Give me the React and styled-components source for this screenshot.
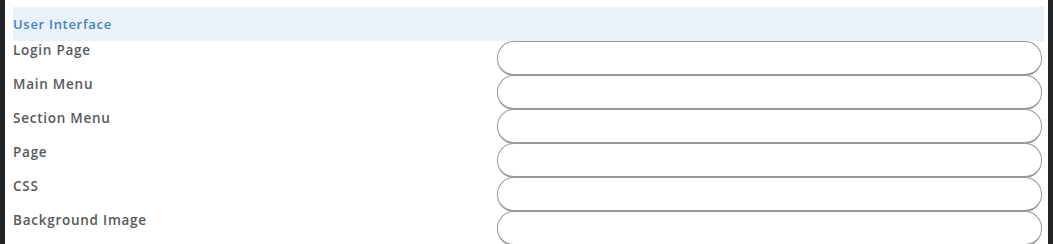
import React from "react";
import styled, { createGlobalStyle } from "styled-components";

const Global = createGlobalStyle`
  html, body { margin: 0; padding: 0; background: #ffffff; }
  body { font-family: "Open Sans", "Noto Sans", sans-serif; }
`;

const Frame = styled.div`
  display: flex;
  height: 244px;
  background: #ffffff;
  border-left: 5px solid #202427;
  border-right: 5px solid #202427;
  box-sizing: border-box;
`;

const Panel = styled.div`
  flex: 1;
  padding: 7px 4px 0 8px;
  overflow: hidden;
`;

const SectionHeader = styled.div`
  height: 34px;
  background: #eaf1f8;
  color: #3f83c4;
  font-size: 13px;
  font-weight: 600;
  display: flex;
  align-items: center;
  letter-spacing: 0.7px;
`;

const Row = styled.div`
  display: grid;
  grid-template-columns: 484px 545px;
  height: 34px;
`;

const Label = styled.div`
  color: #58595b;
  font-size: 13.5px;
  font-weight: 600;
  line-height: 17px;
  padding-top: 1px;
  letter-spacing: 0.75px;
`;

const Input = styled.input`
  box-sizing: border-box;
  width: 545px;
  height: 35px;
  margin: 0;
  border: 1px solid #9a9a9a;
  border-bottom: 2px solid #9a9a9a;
  border-radius: 17px;
  background: #ffffff;
  outline: none;
`;

const fields = [
  "Login Page",
  "Main Menu",
  "Section Menu",
  "Page",
  "CSS",
  "Background Image",
];

export default function App() {
  return (
    <>
      <Global />
      <Frame>
        <Panel>
          <SectionHeader>User Interface</SectionHeader>
          {fields.map((f) => (
            <Row key={f}>
              <Label>{f}</Label>
              <Input type="text" />
            </Row>
          ))}
        </Panel>
      </Frame>
    </>
  );
}
